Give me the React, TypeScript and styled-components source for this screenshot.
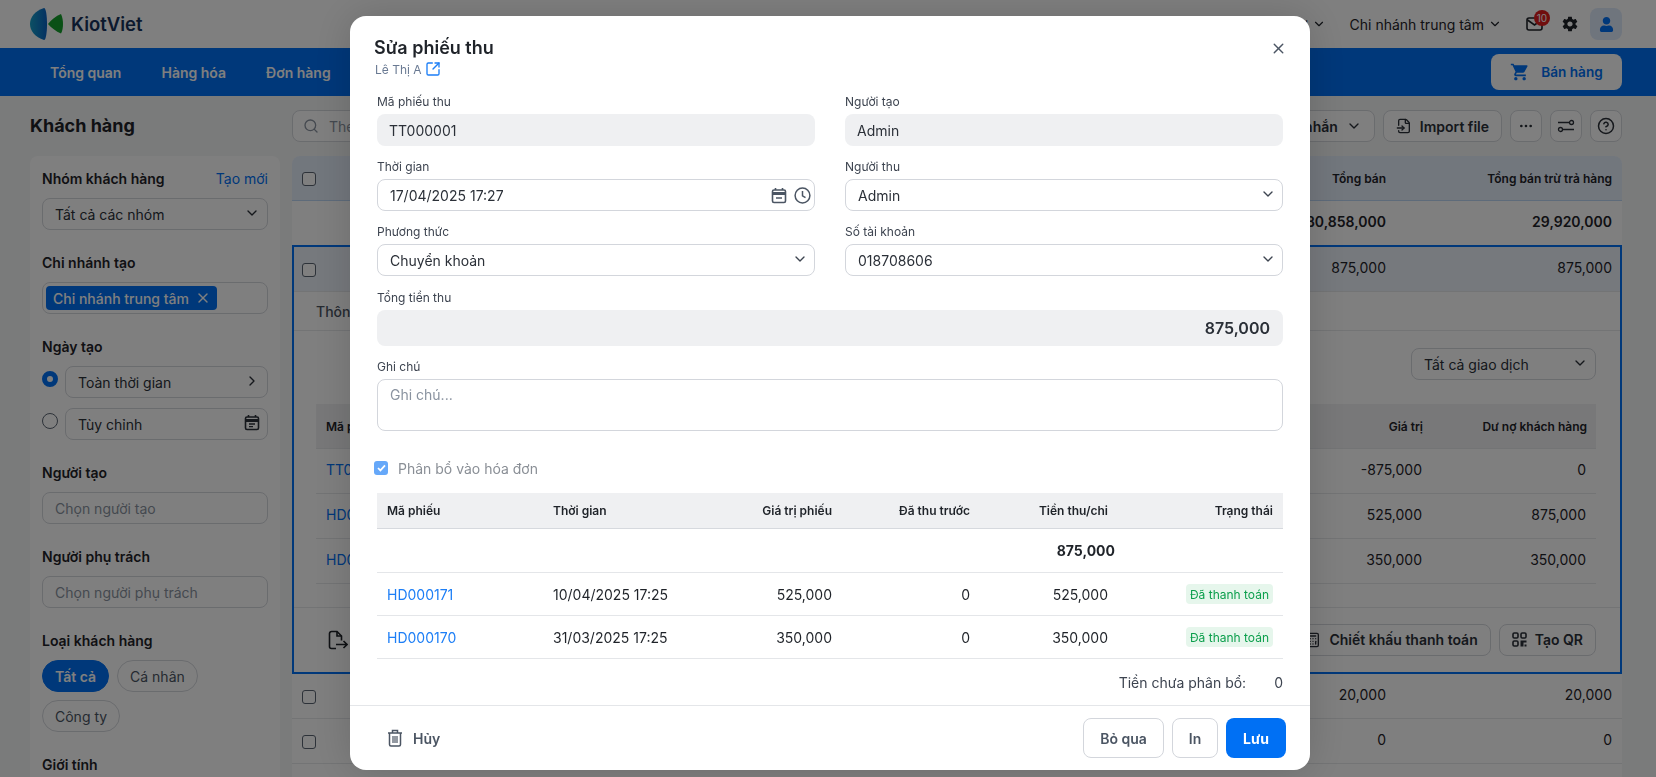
import React from 'react';
import styled, { createGlobalStyle } from 'styled-components';
import {
   Calculator,
   ChevronDown,
   ChevronRight,
   Ellipsis,
   FileInput,
   CircleHelp,
   Search,
   SquareArrowOutUpRight,
   X,
} from 'lucide-react';
import { IoMdSettings } from 'react-icons/io';
import { FaUser } from 'react-icons/fa';
import { MdShoppingCart } from 'react-icons/md';

const GlobalStyle = createGlobalStyle`
   * { box-sizing: border-box; }
   html, body {
      margin: 0;
      height: 777px;
      overflow: hidden;
      background: #f5f6f6;
      font-family: Inter, "Noto Sans", sans-serif;
      font-size: 14px;
      color: #1f2329;
   }
`;

/* background page */

const TopBar = styled.header`
   display: flex;
   align-items: center;
   height: 48px;
   padding: 0 34px 0 30px;
   background: #fff;
`;

const Brand = styled.div`
   display: flex;
   align-items: center;
   gap: 8px;
   font-size: 18.5px;
   font-weight: 600;
   color: #16335c;
`;

const PromoMarks = styled.div`
   display: flex;
   align-items: center;
   gap: 75px;
   margin-left: 501px;
`;

const PromoMark = styled.span<{ $color: string }>`
   width: 8px;
   height: 8px;
   background: ${(p) => p.$color};
`;

const TopRight = styled.div`
   display: flex;
   align-items: center;
   margin-left: auto;
   font-size: 14px;
`;

const TopPicker = styled.div`
   display: flex;
   align-items: center;
   gap: 4px;
   margin-right: 24px;
   white-space: nowrap;
`;

const MailButton = styled.div`
   position: relative;
   display: flex;
   margin-right: 18px;
`;

const MailBadge = styled.span`
   position: absolute;
   top: -7px;
   right: -7px;
   min-width: 16px;
   height: 16px;
   border-radius: 8px;
   background: #e11d1d;
   color: #fff;
   font-size: 10px;
   line-height: 16px;
   text-align: center;
`;

const Avatar = styled.div`
   display: flex;
   align-items: center;
   justify-content: center;
   width: 32px;
   height: 32px;
   margin-left: 11px;
   border-radius: 8px;
   background: #dfeafb;
   color: #0070f4;
`;

const NavBar = styled.nav`
   display: flex;
   align-items: center;
   gap: 40px;
   height: 48px;
   padding: 0 34px 0 50px;
   background: #0070f4;
`;

const NavItem = styled.a`
   color: #fff;
   font-weight: 600;
   font-size: 14px;
`;

const SellButton = styled.button`
   display: flex;
   align-items: center;
   justify-content: center;
   gap: 11px;
   width: 131px;
   height: 36px;
   margin-left: auto;
   border: 0;
   border-radius: 8px;
   background: #fff;
   color: #0070f4;
   font: 600 13.6px Inter, sans-serif;
`;

const Main = styled.main`
   display: grid;
   grid-template-columns: 250px 1330px;
   column-gap: 12px;
   height: 681px;
   padding: 14px 34px 0 30px;
   overflow: hidden;
`;

const Column = styled.div`
   display: flex;
   flex-direction: column;
   gap: 14px;
`;

const PageTitle = styled.h1`
   height: 32px;
   margin: 0;
   font-size: 18px;
   font-weight: 700;
   line-height: 32px;
`;

const Sidebar = styled.aside`
   display: flex;
   flex: 1;
   flex-direction: column;
   gap: 22px;
   padding: 12px;
   border-radius: 8px 8px 0 0;
   background: #fff;
`;

const FilterGroup = styled.div`
   display: flex;
   flex-direction: column;
   gap: 10px;
`;

const FilterHead = styled.div`
   display: flex;
   align-items: center;
   justify-content: space-between;
   height: 20px;
`;

const FilterLabel = styled.span`
   font-weight: 600;
`;

const LinkText = styled.a`
   color: #0070f4;
`;

const BoxField = styled.div<{ $muted?: boolean }>`
   display: flex;
   flex: 1 0 auto;
   align-items: center;
   justify-content: space-between;
   height: 32px;
   padding: 0 7px 0 12px;
   border: 1px solid #d5d8dd;
   border-radius: 8px;
   background: #fff;
   color: ${(p) => (p.$muted ? '#8a93a0' : '#2b3038')};
   svg {
      flex: none;
      margin-top: -3px;
   }
`;

const ChipField = styled(BoxField)`
   padding: 0 3px;
   svg {
      margin-top: 0;
   }
`;

const Chip = styled.span`
   display: flex;
   align-items: center;
   gap: 6px;
   height: 24px;
   padding: 0 6px 0 7px;
   border-radius: 4px;
   background: #0070f4;
   color: #fff;
   font-weight: 500;
`;

const RadioRow = styled.div`
   display: flex;
   gap: 7px;
`;

const Radio = styled.span<{ $on?: boolean }>`
   flex: none;
   width: 16px;
   height: 16px;
   margin-top: 5px;
   border-radius: 50%;
   border: ${(p) => (p.$on ? '5px solid #0070f4' : '1.5px solid #5a6472')};
   background: #fff;
`;

const PillRow = styled.div`
   display: flex;
   flex-wrap: wrap;
   gap: 8px;
   width: 200px;
`;

const Pill = styled.span<{ $on?: boolean }>`
   display: flex;
   align-items: center;
   height: 32px;
   padding: 0 12px;
   border: 1px solid ${(p) => (p.$on ? '#0070f4' : '#d5d8dd')};
   border-radius: 16px;
   background: ${(p) => (p.$on ? '#0070f4' : '#fff')};
   color: ${(p) => (p.$on ? '#fff' : '#4b5563')};
   font-weight: ${(p) => (p.$on ? 600 : 400)};
`;

const Toolbar = styled.div`
   display: flex;
   align-items: center;
   gap: 8px;
   height: 32px;
`;

const SearchBox = styled.div`
   display: flex;
   flex: 1;
   align-items: center;
   gap: 10px;
   height: 32px;
   padding: 0 10px;
   border: 1px solid #d5d8dd;
   border-radius: 8px;
   background: #fff;
   color: #8a93a0;
`;

const ToolButton = styled.button<{ $square?: boolean }>`
   display: flex;
   align-items: center;
   justify-content: center;
   gap: 8px;
   width: ${(p) => (p.$square ? '32px' : 'auto')};
   height: 32px;
   padding: ${(p) => (p.$square ? '0' : '0 12px')};
   border: 1px solid #d5d8dd;
   border-radius: 8px;
   background: #fff;
   color: #2b3038;
   font: 600 14px Inter, sans-serif;
   white-space: nowrap;
`;

const DataTable = styled.section`
   border-radius: 8px 8px 0 0;
   background: #fff;
`;

const DataRow = styled.div<{ $tint?: 'head' | 'row'; $h?: number }>`
   display: grid;
   grid-template-columns: 14px 1fr 240px 226px;
   align-items: center;
   height: ${(p) => p.$h ?? 45}px;
   padding: 0 10px;
   border-bottom: 1px solid
      ${(p) => (p.$tint === 'head' ? '#bcd6f5' : '#e6e8eb')};
   border-radius: ${(p) => (p.$tint === 'head' ? '8px 8px 0 0' : '0')};
   background: ${(p) =>
      p.$tint === 'head' ? '#e5eefb' : p.$tint === 'row' ? '#edf3fb' : '#fff'};
`;

const NoBorderRow = styled(DataRow)`
   border-bottom: 0;
`;

const RowCheck = styled.span`
   width: 14px;
   height: 14px;
   margin-top: 1px;
   border: 1.5px solid #5a6472;
   border-radius: 3px;
   background: #fff;
`;

const DataCell = styled.span<{ $bold?: boolean }>`
   margin-bottom: 3px;
   text-align: right;
   font-weight: ${(p) => (p.$bold ? 600 : 400)};
`;

const HeadCell = styled.span`
   text-align: right;
   font-size: 12px;
   font-weight: 600;
`;

const Spacer = styled.span``;

const Expanded = styled.div`
   height: 429px;
   border: 2px solid #0070f4;
`;

const ExpandedRow = styled(DataRow)`
   padding: 0 8px;
`;

const Tabs = styled.div`
   display: flex;
   align-items: center;
   height: 39px;
   padding-left: 22px;
   border-bottom: 1px solid #e6e8eb;
   color: #4b5563;
   font-weight: 500;
`;

const ExpandedBody = styled.div`
   display: flex;
   flex-direction: column;
   height: 277px;
   padding: 17px 24px 0 22px;
   border-bottom: 1px solid #e6e8eb;
`;

const DealFilter = styled(BoxField)`
   flex: none;
   align-self: flex-end;
   width: 185px;
   margin-bottom: 24px;
`;

const InnerRow = styled.div<{ $head?: boolean }>`
   display: grid;
   grid-template-columns: 1fr 160px 164px;
   align-items: center;
   height: 45px;
   padding: ${(p) => (p.$head ? '0 9px 0 10px' : '0 10px 3px 10px')};
   border-bottom: 1px solid #e6e8eb;
   background: ${(p) => (p.$head ? '#f0f1f2' : '#fff')};
   font-size: ${(p) => (p.$head ? '12px' : '14px')};
   font-weight: ${(p) => (p.$head ? 600 : 400)};
`;

const InnerCode = styled.a`
   color: #0070f4;
`;

const InnerValue = styled.span`
   text-align: right;
`;

const ExpandedFooter = styled.div`
   display: flex;
   align-items: center;
   justify-content: space-between;
   height: 63px;
   padding: 0 24px 0 34px;
`;

const ActionGroup = styled.div`
   display: flex;
   gap: 8px;
`;

/* modal */

const Overlay = styled.div`
   position: fixed;
   inset: 0;
   background: rgba(0, 0, 0, 0.5);
`;

const Modal = styled.div`
   display: flex;
   flex-direction: column;
   width: 960px;
   height: 754px;
   margin: 16px 0 0 350px;
   border-radius: 16px;
   background: #fff;
   box-shadow: 0 0 40px rgba(0, 0, 0, 0.16);
`;

const ModalHead = styled.div`
   position: relative;
   height: 77px;
   padding: 20px 24px 0;
`;

const ModalTitle = styled.h2`
   margin: 0;
   font-size: 18px;
   font-weight: 600;
   line-height: 24px;
`;

const ModalSub = styled.div`
   display: flex;
   align-items: center;
   gap: 3px;
   height: 18px;
   margin-left: 1px;
   font-size: 12px;
   color: #6a7a93;
   svg {
      color: #1c7ef6;
   }
`;

const CloseButton = styled.span`
   position: absolute;
   top: 24px;
   right: 23px;
   display: flex;
   color: #4b5563;
`;

const ModalBody = styled.div`
   flex: 1;
   padding: 0 27px;
`;

const FormGrid = styled.div`
   display: grid;
   grid-template-columns: 438px 438px;
   column-gap: 30px;
   row-gap: 12px;
`;

const FormField = styled.label<{ $wide?: boolean; $push?: boolean }>`
   display: flex;
   flex-direction: column;
   gap: 3px;
   ${(p) => p.$wide && 'grid-column: 1 / -1;'}
   ${(p) => p.$push && 'margin-top: 1px;'}
`;

const FieldLabel = styled.span`
   font-size: 12px;
   line-height: 18px;
   color: #3d4450;
`;

const Control = styled.div<{ $off?: boolean }>`
   display: flex;
   align-items: center;
   justify-content: space-between;
   height: 32px;
   padding: 0 12px;
   border: ${(p) => (p.$off ? '0' : '1px solid #d3d6dc')};
   border-radius: 8px;
   background: ${(p) => (p.$off ? '#eff0f2' : '#fff')};
   color: #2b3038;
`;

const AmountControl = styled(Control)`
   justify-content: flex-end;
   height: 36px;
   padding-right: 13px;
   font-size: 16px;
   font-weight: 600;
`;

const NoteControl = styled(Control)`
   align-items: flex-start;
   height: 52px;
   padding: 6px 12px;
`;

const ChevronSlot = styled.span`
   display: flex;
   margin: -3px -6px 0 0;
   color: #3d4450;
`;

const DateIcons = styled.span`
   display: flex;
   align-items: center;
   gap: 7px;
   margin-right: -9px;
   color: #4b5563;
`;

const Placeholder = styled.span`
   color: #8a93a0;
`;

const AllocRow = styled.div`
   display: flex;
   align-items: center;
   gap: 10px;
   height: 20px;
   margin: 27px 0 15px -3px;
   color: #8a8f96;
`;

const AllocCheck = styled.span`
   display: flex;
   align-items: center;
   justify-content: center;
   width: 14px;
   height: 14px;
   border-radius: 3px;
   background: #66a8f9;
   color: #fff;
`;

const ReceiptRow = styled.div<{ $kind?: 'head' | 'total' }>`
   display: grid;
   grid-template-columns: 166px 150px 149px 138px 138px 165px;
   align-items: center;
   height: ${(p) => (p.$kind === 'head' ? 36 : p.$kind === 'total' ? 44 : 43)}px;
   border-bottom: 1px solid ${(p) => (p.$kind === 'head' ? '#d6d9de' : '#e4e6e9')};
   background: ${(p) => (p.$kind === 'head' ? '#eff0f2' : '#fff')};
   font-size: ${(p) => (p.$kind === 'head' ? '12px' : '14px')};
   font-weight: ${(p) => (p.$kind === 'head' ? 600 : 400)};
`;

const ReceiptCell = styled.span<{ $right?: boolean }>`
   padding: 0 10px;
   text-align: ${(p) => (p.$right ? 'right' : 'left')};
`;

const ReceiptTotal = styled(ReceiptCell)`
   grid-column: 5;
   padding-right: 3px;
   font-weight: 700;
`;

const ReceiptLink = styled(ReceiptCell)`
   color: #1c7ef6;
`;

const StatusCell = styled.span`
   display: flex;
   justify-content: flex-end;
   padding-right: 10px;
`;

const PaidBadge = styled.span`
   display: flex;
   align-items: center;
   height: 20px;
   padding: 0 4px;
   border-radius: 4px;
   background: #e6f6ec;
   color: #0b9f4c;
   font-size: 12px;
`;

const Unallocated = styled.div`
   display: flex;
   align-items: center;
   justify-content: flex-end;
   gap: 28px;
   height: 46px;
   color: #3d4450;
`;

const ModalFooter = styled.div`
   display: flex;
   align-items: center;
   height: 65px;
   padding: 0 24px 0 37px;
   border-top: 1px solid #e4e6e9;
`;

const DeleteAction = styled.span`
   display: flex;
   align-items: center;
   gap: 10px;
   color: #4b5563;
   font-weight: 600;
`;

const FooterActions = styled.div`
   display: flex;
   gap: 8px;
   margin-left: auto;
`;

const FootButton = styled.button<{ $primary?: boolean; $w: number }>`
   width: ${(p) => p.$w}px;
   height: 40px;
   border: ${(p) => (p.$primary ? '0' : '1px solid #d3d6dc')};
   border-radius: 8px;
   background: ${(p) => (p.$primary ? '#0070f4' : '#fff')};
   color: ${(p) => (p.$primary ? '#fff' : '#4b5563')};
   font: ${(p) => (p.$primary ? 700 : 600)} 14px Inter, sans-serif;
`;

/* drawn icons */

const Logo = () => (
   <svg width="33" height="34" viewBox="0 0 33 34" aria-hidden>
      <defs>
         <linearGradient id="kv-leaf" x1="0" y1="0" x2="1" y2="0">
            <stop offset="0" stopColor="#18a0c8" />
            <stop offset="1" stopColor="#0a62c4" />
         </linearGradient>
      </defs>
      <path d="M14 1C5 4 0 10 0 17s5 13 14 16c2 0 3-8 3-16S16 1 14 1Z" fill="url(#kv-leaf)" />
      <path d="M31 7c1.500 3 2 7 2 10s-.5 7-2 9.500c-5-2-10-6-13-9.500 3-4 8-8 13-10Z" fill="#15a02c" />
   </svg>
);

const CalendarNote = () => (
   <svg width="16" height="17" viewBox="0 0 16 17" fill="none" stroke="currentColor" strokeWidth="1.6" aria-hidden>
      <rect x="1.5" y="3" width="13" height="12.5" rx="1.5" />
      <path d="M1.5 6.5h13" strokeWidth="3" />
      <path d="M4.5 1v2M11.5 1v2" />
      <path d="M5 10h6M5 12.6h4" strokeWidth="1.3" />
   </svg>
);

const CalendarMinus = () => (
   <svg width="16" height="17" viewBox="0 0 16 17" fill="none" stroke="currentColor" strokeWidth="1.6" aria-hidden>
      <rect x="1.5" y="3" width="13" height="12.5" rx="1.5" />
      <path d="M1.5 6.5h13" strokeWidth="3" />
      <path d="M4.5 1v2M11.5 1v2" />
      <path d="M5 11h6" strokeWidth="1.5" />
   </svg>
);

const ClockIcon = () => (
   <svg width="17" height="17" viewBox="0 0 17 17" fill="none" stroke="currentColor" strokeWidth="1.5" aria-hidden>
      <circle cx="8.5" cy="8.5" r="7.4" />
      <path d="M8.5 4v4.8l3 1.8" />
   </svg>
);

const TrashIcon = () => (
   <svg width="16" height="18" viewBox="0 0 16 18" fill="none" stroke="currentColor" strokeWidth="1.5" aria-hidden>
      <path d="M1 4h14M5.5 4V1.500h5V4" />
      <path d="M2.500 4v11.500a1.500 1.500 0 0 0 1.500 1.500h8a1.500 1.500 0 0 0 1.500-1.500V4" />
      <path d="M6 7v7M8 7v7M10 7v7" strokeWidth="1.2" />
   </svg>
);

const MailIcon = () => (
   <svg width="17" height="14" viewBox="0 0 17 14" fill="none" stroke="currentColor" strokeWidth="1.6" aria-hidden>
      <rect x="1" y="1" width="15" height="12" rx="2" />
      <path d="m1.500 3 7 5 7-5" />
   </svg>
);

const SlidersIcon = () => (
   <svg width="18" height="14" viewBox="0 0 18 14" fill="none" stroke="currentColor" strokeWidth="1.3" aria-hidden>
      <path d="M1 3.500h11M6 10.500h11" />
      <circle cx="14.500" cy="3.500" r="2" />
      <circle cx="3.500" cy="10.500" r="2" />
   </svg>
);

const CheckMark = () => (
   <svg width="9" height="8" viewBox="0 0 9 8" fill="none" stroke="currentColor" strokeWidth="1.7" aria-hidden>
      <path d="m1 4 2.400 2.400L8 1.400" />
   </svg>
);

const ExportIcon = () => (
   <svg width="20" height="20" viewBox="0 0 20 20" fill="none" stroke="currentColor" strokeWidth="1.6" aria-hidden>
      <path d="M8 18.500H3.500a2 2 0 0 1-2-2v-13a2 2 0 0 1 2-2H9L13.500 6v4.500" />
      <path d="M9 1.500V6h4.500" />
      <path d="M8 14.500h11M15.500 11l3.500 3.500-3.500 3.500" />
   </svg>
);

const QrBlocks = () => (
   <svg width="15" height="15" viewBox="0 0 15 15" fill="none" stroke="currentColor" strokeWidth="1.6" aria-hidden>
      <rect x="1" y="1" width="5" height="5" rx="1.2" />
      <rect x="9" y="1" width="5" height="5" rx="1.2" />
      <rect x="1" y="9" width="5" height="5" rx="1.2" />
      <path d="M8.500 8.500h6v2h-3v4h-3ZM12.500 12.500h2v2h-2Z" fill="currentColor" stroke="none" />
   </svg>
);

const receipts = [
   { code: 'HD000171', time: '10/04/2025 17:25', value: '525,000' },
   { code: 'HD000170', time: '31/03/2025 17:25', value: '350,000' },
];

const ledger = [
   { code: 'TT000001', value: '-875,000', debt: '0' },
   { code: 'HD000171', value: '525,000', debt: '875,000' },
   { code: 'HD000170', value: '350,000', debt: '350,000' },
];

const BackgroundPage: React.FC = () => (
   <>
      <TopBar>
         <Brand>
            <Logo />
            KiotViet
         </Brand>
         <PromoMarks>
            <PromoMark $color="#18a02c" />
            <PromoMark $color="#0a62c4" />
         </PromoMarks>
         <TopRight>
            <TopPicker>
               Hỗ trợ
               <ChevronDown size={14} />
            </TopPicker>
            <TopPicker>
               Chi nhánh trung tâm
               <ChevronDown size={14} />
            </TopPicker>
            <MailButton>
               <MailIcon />
               <MailBadge>10</MailBadge>
            </MailButton>
            <IoMdSettings size={18} />
            <Avatar>
               <FaUser size={15} />
            </Avatar>
         </TopRight>
      </TopBar>
      <NavBar>
         <NavItem>Tổng quan</NavItem>
         <NavItem>Hàng hóa</NavItem>
         <NavItem>Đơn hàng</NavItem>
         <SellButton>
            <MdShoppingCart size={20} />
            Bán hàng
         </SellButton>
      </NavBar>
      <Main>
         <Column>
            <PageTitle>Khách hàng</PageTitle>
            <Sidebar>
               <FilterGroup>
                  <FilterHead>
                     <FilterLabel>Nhóm khách hàng</FilterLabel>
                     <LinkText>Tạo mới</LinkText>
                  </FilterHead>
                  <BoxField>
                     Tất cả các nhóm
                     <ChevronDown size={16} />
                  </BoxField>
               </FilterGroup>
               <FilterGroup>
                  <FilterHead>
                     <FilterLabel>Chi nhánh tạo</FilterLabel>
                  </FilterHead>
                  <ChipField>
                     <Chip>
                        Chi nhánh trung tâm
                        <X size={16} />
                     </Chip>
                  </ChipField>
               </FilterGroup>
               <FilterGroup>
                  <FilterHead>
                     <FilterLabel>Ngày tạo</FilterLabel>
                  </FilterHead>
                  <RadioRow>
                     <Radio $on />
                     <BoxField>
                        Toàn thời gian
                        <ChevronRight size={16} />
                     </BoxField>
                  </RadioRow>
                  <RadioRow>
                     <Radio />
                     <BoxField>
                        Tùy chỉnh
                        <CalendarNote />
                     </BoxField>
                  </RadioRow>
               </FilterGroup>
               <FilterGroup>
                  <FilterHead>
                     <FilterLabel>Người tạo</FilterLabel>
                  </FilterHead>
                  <BoxField $muted>Chọn người tạo</BoxField>
               </FilterGroup>
               <FilterGroup>
                  <FilterHead>
                     <FilterLabel>Người phụ trách</FilterLabel>
                  </FilterHead>
                  <BoxField $muted>Chọn người phụ trách</BoxField>
               </FilterGroup>
               <FilterGroup>
                  <FilterHead>
                     <FilterLabel>Loại khách hàng</FilterLabel>
                  </FilterHead>
                  <PillRow>
                     <Pill $on>Tất cả</Pill>
                     <Pill>Cá nhân</Pill>
                     <Pill>Công ty</Pill>
                  </PillRow>
               </FilterGroup>
               <FilterGroup>
                  <FilterHead>
                     <FilterLabel>Giới tính</FilterLabel>
                  </FilterHead>
               </FilterGroup>
            </Sidebar>
         </Column>
         <Column>
            <Toolbar>
               <SearchBox>
                  <Search size={16} />
                  Theo mã, tên, điện thoại
               </SearchBox>
               <ToolButton>
                  Gửi tin nhắn
                  <ChevronDown size={16} />
               </ToolButton>
               <ToolButton>
                  <FileInput size={16} />
                  Import file
               </ToolButton>
               <ToolButton $square>
                  <Ellipsis size={16} />
               </ToolButton>
               <ToolButton $square>
                  <SlidersIcon />
               </ToolButton>
               <ToolButton $square>
                  <CircleHelp size={18} />
               </ToolButton>
            </Toolbar>
            <DataTable>
               <DataRow $tint="head" $h={45}>
                  <RowCheck />
                  <Spacer />
                  <HeadCell>Tổng bán</HeadCell>
                  <HeadCell>Tổng bán trừ trả hàng</HeadCell>
               </DataRow>
               <NoBorderRow $h={44}>
                  <Spacer />
                  <Spacer />
                  <DataCell $bold>30,858,000</DataCell>
                  <DataCell $bold>29,920,000</DataCell>
               </NoBorderRow>
               <Expanded>
                  <ExpandedRow $tint="row" $h={45}>
                     <RowCheck />
                     <Spacer />
                     <DataCell>875,000</DataCell>
                     <DataCell>875,000</DataCell>
                  </ExpandedRow>
                  <Tabs>Thông tin</Tabs>
                  <ExpandedBody>
                     <DealFilter>
                        Tất cả giao dịch
                        <ChevronDown size={16} />
                     </DealFilter>
                     <InnerRow $head>
                        <span>Mã phiếu</span>
                        <InnerValue>Giá trị</InnerValue>
                        <InnerValue>Dư nợ khách hàng</InnerValue>
                     </InnerRow>
                     {ledger.map((row) => (
                        <InnerRow key={row.code}>
                           <InnerCode>{row.code}</InnerCode>
                           <InnerValue>{row.value}</InnerValue>
                           <InnerValue>{row.debt}</InnerValue>
                        </InnerRow>
                     ))}
                  </ExpandedBody>
                  <ExpandedFooter>
                     <ExportIcon />
                     <ActionGroup>
                        <ToolButton>
                           <Calculator size={16} />
                           Chiết khấu thanh toán
                        </ToolButton>
                        <ToolButton>
                           <QrBlocks />
                           Tạo QR
                        </ToolButton>
                     </ActionGroup>
                  </ExpandedFooter>
               </Expanded>
               <DataRow>
                  <RowCheck />
                  <Spacer />
                  <DataCell>20,000</DataCell>
                  <DataCell>20,000</DataCell>
               </DataRow>
               <DataRow>
                  <RowCheck />
                  <Spacer />
                  <DataCell>0</DataCell>
                  <DataCell>0</DataCell>
               </DataRow>
               <NoBorderRow $h={13} />
            </DataTable>
         </Column>
      </Main>
   </>
);

const ReceiptModal: React.FC = () => (
   <Overlay>
      <Modal>
         <ModalHead>
            <ModalTitle>Sửa phiếu thu</ModalTitle>
            <ModalSub>
               Lê Thị A
               <SquareArrowOutUpRight size={16} />
            </ModalSub>
            <CloseButton>
               <X size={17} />
            </CloseButton>
         </ModalHead>
         <ModalBody>
            <FormGrid>
               <FormField>
                  <FieldLabel>Mã phiếu thu</FieldLabel>
                  <Control $off>TT000001</Control>
               </FormField>
               <FormField>
                  <FieldLabel>Người tạo</FieldLabel>
                  <Control $off>Admin</Control>
               </FormField>
               <FormField>
                  <FieldLabel>Thời gian</FieldLabel>
                  <Control>
                     17/04/2025 17:27
                     <DateIcons>
                        <CalendarMinus />
                        <ClockIcon />
                     </DateIcons>
                  </Control>
               </FormField>
               <FormField>
                  <FieldLabel>Người thu</FieldLabel>
                  <Control>
                     Admin
                     <ChevronSlot>
                        <ChevronDown size={16} />
                     </ChevronSlot>
                  </Control>
               </FormField>
               <FormField>
                  <FieldLabel>Phương thức</FieldLabel>
                  <Control>
                     Chuyển khoản
                     <ChevronSlot>
                        <ChevronDown size={16} />
                     </ChevronSlot>
                  </Control>
               </FormField>
               <FormField>
                  <FieldLabel>Số tài khoản</FieldLabel>
                  <Control>
                     018708606
                     <ChevronSlot>
                        <ChevronDown size={16} />
                     </ChevronSlot>
                  </Control>
               </FormField>
               <FormField $wide $push>
                  <FieldLabel>Tổng tiền thu</FieldLabel>
                  <AmountControl $off>875,000</AmountControl>
               </FormField>
               <FormField $wide>
                  <FieldLabel>Ghi chú</FieldLabel>
                  <NoteControl>
                     <Placeholder>Ghi chú...</Placeholder>
                  </NoteControl>
               </FormField>
            </FormGrid>
            <AllocRow>
               <AllocCheck>
                  <CheckMark />
               </AllocCheck>
               Phân bổ vào hóa đơn
            </AllocRow>
            <ReceiptRow $kind="head">
               <ReceiptCell>Mã phiếu</ReceiptCell>
               <ReceiptCell>Thời gian</ReceiptCell>
               <ReceiptCell $right>Giá trị phiếu</ReceiptCell>
               <ReceiptCell $right>Đã thu trước</ReceiptCell>
               <ReceiptCell $right>Tiền thu/chi</ReceiptCell>
               <ReceiptCell $right>Trạng thái</ReceiptCell>
            </ReceiptRow>
            <ReceiptRow $kind="total">
               <ReceiptTotal $right>875,000</ReceiptTotal>
            </ReceiptRow>
            {receipts.map((row) => (
               <ReceiptRow key={row.code}>
                  <ReceiptLink>{row.code}</ReceiptLink>
                  <ReceiptCell>{row.time}</ReceiptCell>
                  <ReceiptCell $right>{row.value}</ReceiptCell>
                  <ReceiptCell $right>0</ReceiptCell>
                  <ReceiptCell $right>{row.value}</ReceiptCell>
                  <StatusCell>
                     <PaidBadge>Đã thanh toán</PaidBadge>
                  </StatusCell>
               </ReceiptRow>
            ))}
            <Unallocated>
               <span>Tiền chưa phân bổ:</span>
               <span>0</span>
            </Unallocated>
         </ModalBody>
         <ModalFooter>
            <DeleteAction>
               <TrashIcon />
               Hủy
            </DeleteAction>
            <FooterActions>
               <FootButton $w={81}>Bỏ qua</FootButton>
               <FootButton $w={46}>In</FootButton>
               <FootButton $w={60} $primary>
                  Lưu
               </FootButton>
            </FooterActions>
         </ModalFooter>
      </Modal>
   </Overlay>
);

const App: React.FC = () => (
   <>
      <GlobalStyle />
      <BackgroundPage />
      <ReceiptModal />
   </>
);

export default App;
